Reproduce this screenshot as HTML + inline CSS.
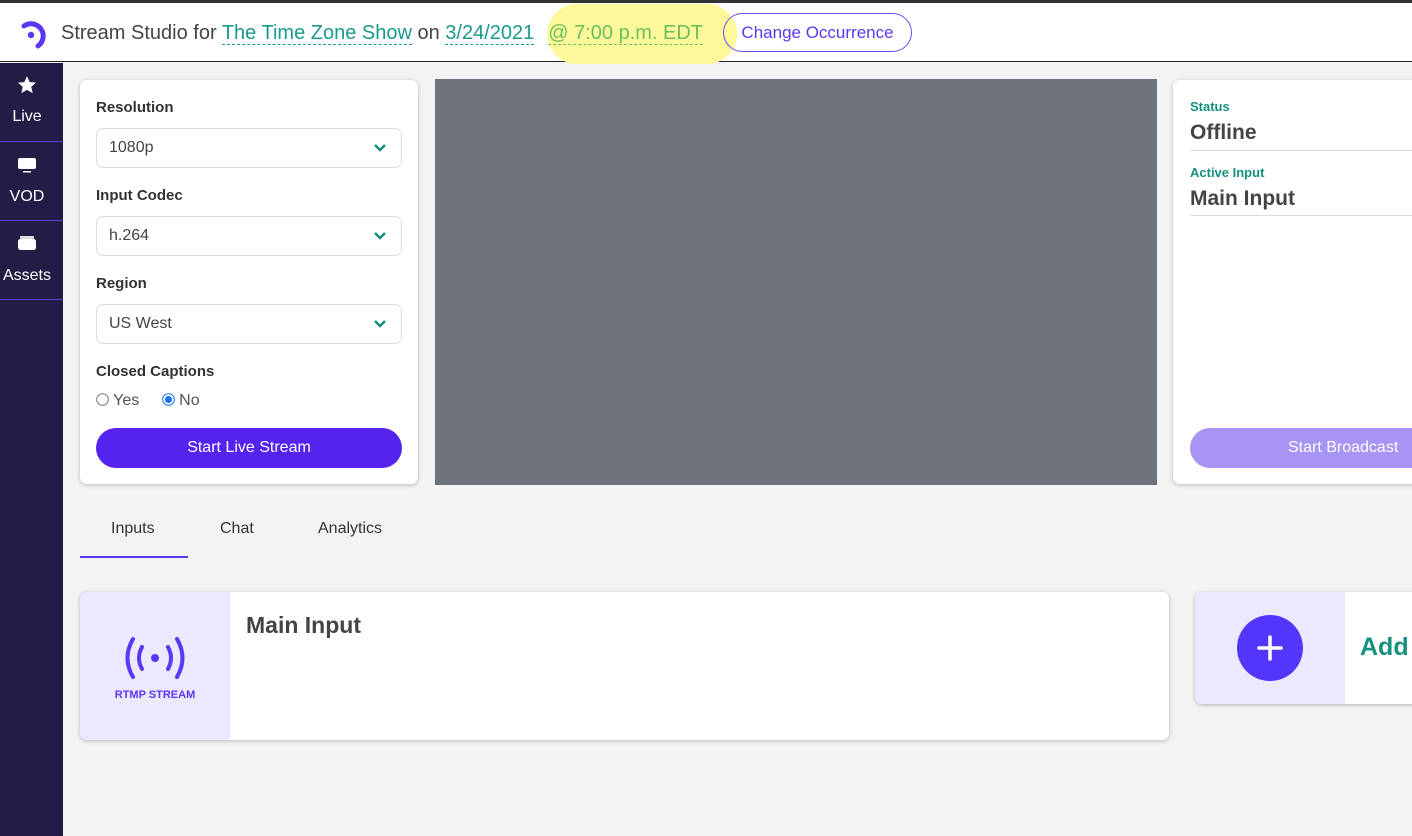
<!DOCTYPE html>
<html><head><meta charset="utf-8"><style>
*{box-sizing:border-box;margin:0;padding:0}
body{width:1412px;height:836px;overflow:hidden;background:#f3f3f3;font-family:"Liberation Sans",sans-serif;position:relative;color:#333}
.abs{position:absolute}
.top{left:0;top:0;width:1412px;height:3px;background:#333}
.hdr{left:0;top:3px;width:1412px;height:59px;background:#fff;border-bottom:1px solid #222}
.side{left:0;top:63px;width:63px;height:773px;background:#221d46}
.nav{position:absolute;left:0;width:63px;height:79px;color:#fff;font-size:16px;border-bottom:1px solid #5a3de0}
.nav .in{width:54px;text-align:center}
.card{background:#fff;border-radius:7px;box-shadow:0 1px 4px rgba(0,0,0,.25)}
.lbl{font-weight:bold;font-size:15px;color:#333}
.sel{position:absolute;left:16px;width:306px;height:40px;border:1px solid #ddd;border-radius:7px;font-size:16px;color:#444;padding:10px 12px}
.sel svg{position:absolute;right:14px;top:14px}
.dash{border-bottom:1px dashed #1a9a8a}
</style></head><body>
<div class="abs top"></div>
<div class="abs hdr">
<svg class="abs" style="left:20px;top:15px" width="32" height="32" viewBox="0 0 32 32"><path d="M4 8 A12 12 0 1 1 18 28" fill="none" stroke="#5b37f5" stroke-width="5" stroke-linecap="round"/><circle cx="11" cy="17" r="3.2" fill="#5b37f5"/></svg>
<div class="abs" style="left:547px;top:1px;width:190px;height:60px;border-radius:30px;background:#fdf99b"></div>
<div class="abs" style="left:61px;top:19px;font-size:20px;color:#444;white-space:nowrap">Stream Studio for <span class="dash" style="color:#1a9a8a">The Time Zone Show</span> on <span class="dash" style="color:#1a9a8a">3/24/2021</span><span style="color:#6cbf5d;border-bottom:1px dashed #6cbf5d;margin-left:14px">@ 7:00 p.m. EDT</span></div>
<div class="abs" style="left:723px;top:10px;width:189px;height:39px;border:1px solid #6a4cf5;border-radius:20px;color:#5b37f5;font-size:17px;text-align:center;line-height:37px">Change Occurrence</div>
</div>
<div class="abs side">
<div class="nav" style="top:0"><div class="in"><svg style="margin-top:12px" width="20" height="20" viewBox="0 0 24 24"><path fill="#fff" d="M12 1.5l3.2 7 7.6.7-5.7 5.1 1.7 7.5L12 17.9l-6.8 3.9 1.7-7.5L1.2 9.2l7.6-.7z"/></svg><div style="margin-top:8px">Live</div></div></div>
<div class="nav" style="top:79px"><div class="in"><svg style="margin-top:14px" width="20" height="18" viewBox="0 0 20 18"><rect x="1" y="2" width="18" height="11" rx="2" fill="#fff"/><rect x="6" y="15" width="8" height="1.5" fill="#fff"/></svg><div style="margin-top:9px">VOD</div></div></div>
<div class="nav" style="top:158px"><div class="in"><svg style="margin-top:14px" width="20" height="18" viewBox="0 0 20 18"><rect x="3" y="1" width="14" height="3" rx="1" fill="#ddd"/><rect x="1" y="4" width="18" height="11" rx="2.5" fill="#fff"/></svg><div style="margin-top:9px">Assets</div></div></div>
</div>

<div class="abs card" style="left:80px;top:80px;width:338px;height:404px">
<div class="abs lbl" style="left:16px;top:19px">Resolution</div>
<div class="sel" style="top:48px">1080p<svg width="14" height="10" viewBox="0 0 14 10"><path d="M2 2l5 5 5-5" fill="none" stroke="#16907f" stroke-width="2.5"/></svg></div>
<div class="abs lbl" style="left:16px;top:107px">Input Codec</div>
<div class="sel" style="top:136px">h.264<svg width="14" height="10" viewBox="0 0 14 10"><path d="M2 2l5 5 5-5" fill="none" stroke="#16907f" stroke-width="2.5"/></svg></div>
<div class="abs lbl" style="left:16px;top:195px">Region</div>
<div class="sel" style="top:224px">US West<svg width="14" height="10" viewBox="0 0 14 10"><path d="M2 2l5 5 5-5" fill="none" stroke="#16907f" stroke-width="2.5"/></svg></div>
<div class="abs lbl" style="left:16px;top:283px">Closed Captions</div>
<div class="abs" style="left:16px;top:312px;font-size:16px;color:#555;white-space:nowrap"><svg width="13" height="13" viewBox="0 0 13 13" style="vertical-align:-1px"><circle cx="6.5" cy="6.5" r="5.8" fill="#fff" stroke="#777"/></svg> Yes <span style="margin-left:18px"></span><svg width="13" height="13" viewBox="0 0 13 13" style="vertical-align:-1px"><circle cx="6.5" cy="6.5" r="5.8" fill="#fff" stroke="#1a73e8"/><circle cx="6.5" cy="6.5" r="3.5" fill="#1a73e8"/></svg> No</div>
<div class="abs" style="left:16px;top:348px;width:306px;height:40px;background:#5424ee;border-radius:20px;color:#fff;font-size:16px;text-align:center;line-height:40px">Start Live Stream</div>
</div>

<div class="abs" style="left:435px;top:79px;width:722px;height:406px;background:#6e727b"></div>

<div class="abs card" style="left:1173px;top:80px;width:260px;height:404px">
<div class="abs" style="left:17px;top:19px;font-size:13px;font-weight:bold;color:#16907f">Status</div>
<div class="abs" style="left:17px;top:41px;font-size:21px;font-weight:bold;color:#444">Offline</div>
<div class="abs" style="left:17px;top:70px;width:260px;height:1px;background:#ddd"></div>
<div class="abs" style="left:17px;top:85px;font-size:13px;font-weight:bold;color:#16907f">Active Input</div>
<div class="abs" style="left:17px;top:107px;font-size:21px;font-weight:bold;color:#444">Main Input</div>
<div class="abs" style="left:17px;top:135px;width:260px;height:1px;background:#ddd"></div>
<div class="abs" style="left:17px;top:348px;width:260px;height:40px;background:#a894f4;border-radius:20px;color:#fff;font-size:16px;line-height:40px;padding-left:98px">Start Broadcast</div>
</div>

<div class="abs" style="left:111px;top:520px;font-size:16px;color:#333">Inputs</div>
<div class="abs" style="left:220px;top:520px;font-size:16px;color:#333">Chat</div>
<div class="abs" style="left:318px;top:520px;font-size:16px;color:#333">Analytics</div>
<div class="abs" style="left:80px;top:556px;width:108px;height:2px;background:#5b37f5"></div>

<div class="abs card" style="left:80px;top:592px;width:1089px;height:148px;overflow:hidden">
<div class="abs" style="left:0;top:0;width:150px;height:148px;background:#ebe8ff"></div>
<svg class="abs" style="left:42px;top:44px" width="66" height="44" viewBox="0 0 66 44"><g fill="none" stroke="#5b37f5" stroke-width="4" stroke-linecap="round"><path d="M11 3 Q0 22 11 41"/><path d="M55 3 Q66 22 55 41"/><path d="M20 11 Q14 22 20 33"/><path d="M46 11 Q52 22 46 33"/></g><circle cx="33" cy="22" r="4" fill="#5b37f5"/></svg>
<div class="abs" style="left:0;top:97px;width:150px;text-align:center;font-size:11px;font-weight:bold;color:#5b37f5">RTMP STREAM</div>
<div class="abs" style="left:166px;top:20px;font-size:23px;font-weight:bold;color:#444">Main Input</div>
</div>

<div class="abs card" style="left:1195px;top:592px;width:240px;height:112px;overflow:hidden">
<div class="abs" style="left:0;top:0;width:150px;height:112px;background:#ebe8ff"></div>
<div class="abs" style="left:42px;top:23px;width:66px;height:66px;border-radius:50%;background:#5236fb"></div>
<svg class="abs" style="left:60px;top:41px" width="30" height="30" viewBox="0 0 30 30"><path d="M15 4v22M4 15h22" stroke="#fff" stroke-width="3.5" stroke-linecap="round"/></svg>
<div class="abs" style="left:165px;top:41px;font-size:25px;font-weight:bold;color:#16907f">Add</div>
</div>
</body></html>
